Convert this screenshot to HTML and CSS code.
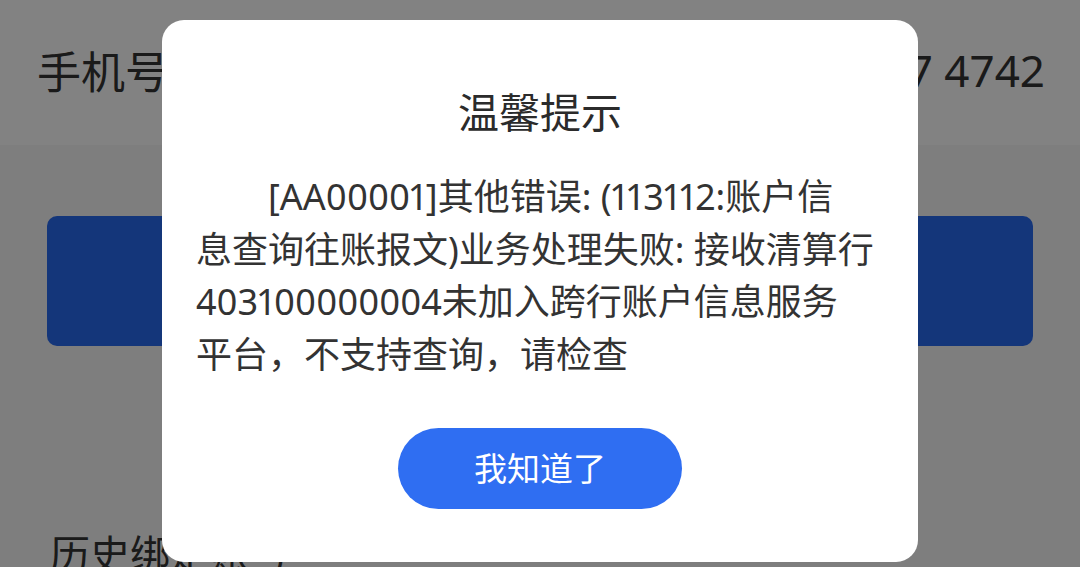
FILE: index.html
```html
<!DOCTYPE html>
<html lang="zh-CN">
<head>
<meta charset="utf-8">
<title>温馨提示</title>
<link rel="stylesheet" href="styles.css">
</head>
<body>
<div class="page">
  <header class="phone-row">
    <span class="phone-label">手机号</span>
    <span class="phone-value">138 1237 4742</span>
  </header>
  <main class="content">
    <div class="primary-btn"></div>
    <div class="history-title">历史绑定账号</div>
  </main>
</div>
<div class="mask">
  <div class="dialog">
    <h2 class="dialog-title">温馨提示</h2>
    <p class="dialog-msg">[AA00001]其他错误: (113112:账户信<br>息查询往账报文)业务处理失败: 接收清算行<br>403100000004未加入跨行账户信息服务<br>平台，不支持查询，请检查</p>
    <button class="dialog-btn">我知道了</button>
  </div>
</div>
</body>
</html>
```

FILE: styles.css
```css
* { box-sizing: border-box; }
html, body {
  margin: 0;
  padding: 0;
  width: 1080px;
  height: 567px;
  overflow: hidden;
  font-family: "Noto Sans", "Noto Sans CJK SC", sans-serif;
  color: #333;
}
.page {
  width: 1080px;
  height: 567px;
  background: #f7f7f7;
}
.phone-row {
  height: 145px;
  background: #fff;
  display: flex;
  align-items: center;
  justify-content: space-between;
  padding: 0 35px 6px 37px;
  font-size: 44px;
  color: #333;
}
.content {
  display: flex;
  flex-direction: column;
}
.primary-btn {
  margin: 71px 47px 0;
  height: 130px;
  border-radius: 10px;
  background: #296aef;
}
.history-title {
  margin-top: 182px;
  padding-left: 50px;
  font-size: 40px;
  line-height: 52px;
  color: #333;
}
.mask {
  position: fixed;
  inset: 0;
  background: rgba(0, 0, 0, 0.49);
  display: flex;
  justify-content: center;
  align-items: flex-start;
  padding-top: 20px;
}
.dialog {
  width: 756px;
  height: 542px;
  background: #fff;
  border-radius: 22px;
  padding: 64px 34px 53px;
  display: flex;
  flex-direction: column;
  align-items: center;
}
.dialog-title {
  margin: 0;
  font-size: 41px;
  line-height: 56px;
  font-weight: 400;
  color: #2b2b2b;
}
.dialog-msg {
  margin: 31px 0 0;
  width: 100%;
  font-size: 36px;
  line-height: 52.5px;
  text-indent: 2em;
  color: #333;
  white-space: nowrap;
  font-variant-numeric: proportional-nums;
}
.dialog-btn {
  margin-top: 47px;
  width: 284px;
  height: 81px;
  border: none;
  border-radius: 41px;
  background: #2f6ef2;
  color: #fff;
  font-family: "Noto Sans", "Noto Sans CJK SC", sans-serif;
  font-size: 33px;
  padding: 0 0 4px;
}
```
